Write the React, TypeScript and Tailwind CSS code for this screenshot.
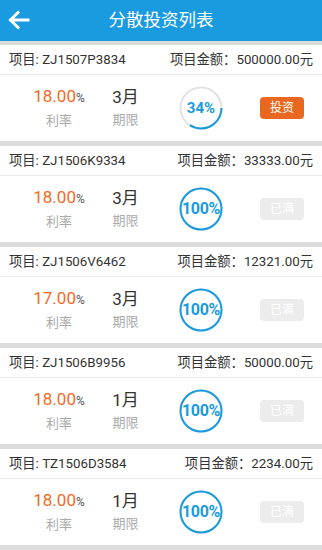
import React from 'react'

type Project = {
  code: string
  amount: string
  rate: string
  term: string
  percent: number
}

const projects: Project[] = [
  { code: 'ZJ1507P3834', amount: '500000.00', rate: '18.00', term: '3月', percent: 34 },
  { code: 'ZJ1506K9334', amount: '33333.00', rate: '18.00', term: '3月', percent: 100 },
  { code: 'ZJ1506V6462', amount: '12321.00', rate: '17.00', term: '3月', percent: 100 },
  { code: 'ZJ1506B9956', amount: '50000.00', rate: '18.00', term: '1月', percent: 100 },
  { code: 'TZ1506D3584', amount: '2234.00', rate: '18.00', term: '1月', percent: 100 },
]

const font = { fontFamily: 'Roboto, "Noto Sans CJK SC", sans-serif' }

function Ring({ percent }: { percent: number }) {
  const r = 20.5
  const c = 2 * Math.PI * r
  const done = percent >= 100
  return (
    <div className="relative h-[46px] w-[46px]">
      <svg width="46" height="46" viewBox="0 0 46 46" className="absolute inset-0">
        <circle cx="23" cy="23" r={r} fill="none" stroke="#e3e3e3" strokeWidth="2" />
        <circle
          cx="23"
          cy="23"
          r={r}
          fill="none"
          stroke="#1a9be0"
          strokeWidth="2"
          strokeDasharray={`${(c * percent) / 100} ${c}`}
        />
      </svg>
      <div
        className={`absolute inset-0 flex items-center justify-center font-bold text-[#1a9be0] ${
          done ? 'text-[16px] tracking-[-0.3px]' : 'text-[15px]'
        }`}
      >
        {percent}%
      </div>
    </div>
  )
}

function Card({ p }: { p: Project }) {
  const full = p.percent >= 100
  return (
    <div className="bg-white">
      <div className="flex h-[30px] items-center justify-between border-b border-[#ececec] px-[9px] text-[13.3px] text-[#333]">
        <span>项目: {p.code}</span>
        <span>项目金额：{p.amount}元</span>
      </div>
      <div className="flex h-[66px] items-center">
        <div className="ml-[32px] flex w-[54px] flex-col items-center whitespace-nowrap">
          <div className="leading-[20px] text-[#f26a1f]">
            <span className="text-[17px]">{p.rate}</span>
            <span className="text-[12px] text-[#555]">%</span>
          </div>
          <div className="mt-[3px] text-[13px] text-[#aaa]">利率</div>
        </div>
        <div className="ml-[26px] flex w-[27px] flex-col items-center whitespace-nowrap">
          <div className="text-[17px] leading-[20px] text-[#333]">{p.term}</div>
          <div className="mt-[3px] text-[13px] text-[#aaa]">期限</div>
        </div>
        <div className="ml-[39px]">
          <Ring percent={p.percent} />
        </div>
        <div className="ml-[36px]">
          {full ? (
            <div className="flex h-[22px] w-[44px] items-center justify-center rounded-[4px] bg-[#ececec] text-[12px] text-white">
              已满
            </div>
          ) : (
            <div className="flex h-[22px] w-[44px] items-center justify-center rounded-[4px] bg-[#e9671e] text-[12px] text-white">
              投资
            </div>
          )}
        </div>
      </div>
    </div>
  )
}

export default function App() {
  return (
    <div className="h-[550px] w-[322px] overflow-hidden bg-[#dcdcdc]" style={font}>
      <div className="relative flex h-[41px] items-center justify-center bg-[#1a9be0]">
        <svg className="absolute left-[8px] top-[10px]" width="22" height="20" viewBox="0 0 22 20">
          <path d="M20 10H3M10 2.5L2.5 10l7.5 7.5" fill="none" stroke="white" strokeWidth="3" strokeLinecap="square" />
        </svg>
        <span className="text-[17.5px] text-white">分散投资列表</span>
      </div>
      <div className="flex flex-col gap-[5px] pt-[4px]">
        {projects.map((p) => (
          <Card key={p.code} p={p} />
        ))}
      </div>
    </div>
  )
}
